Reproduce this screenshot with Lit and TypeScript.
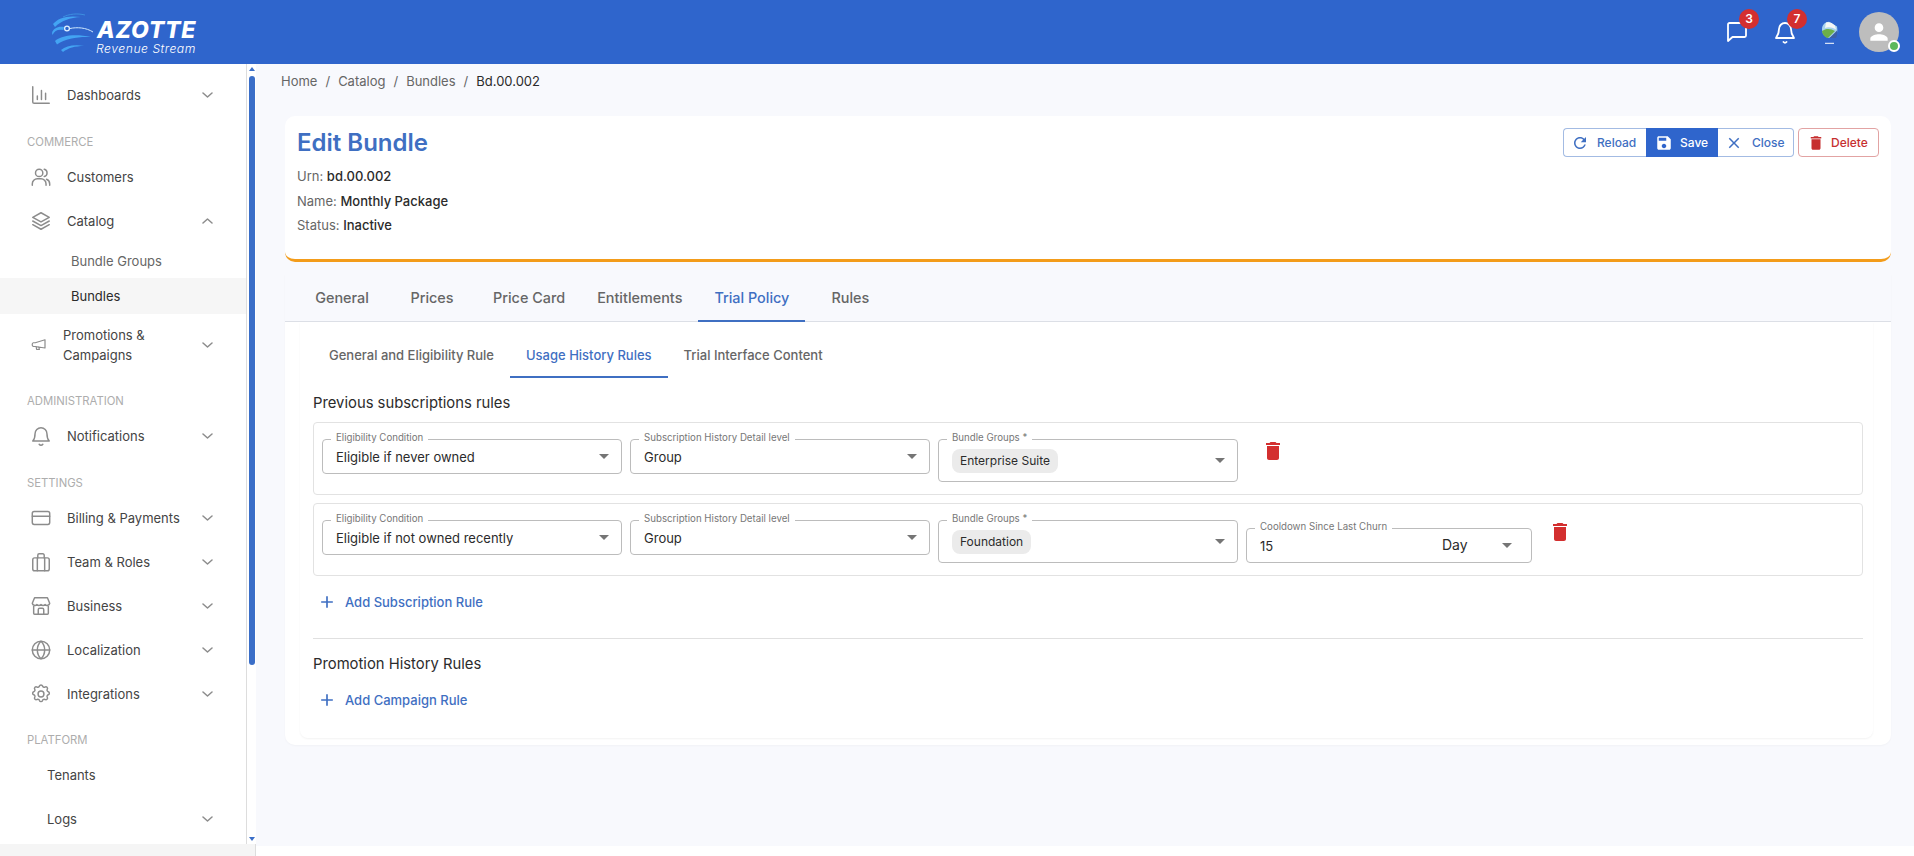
import { LitElement, css, html, svg } from "lit";
import { customElement } from "lit/decorators.js";

// outline icons for the sidebar, 24x24 box
const NAV_ICONS: Record<string, unknown> = {
  chart: svg`<path d="M3 3v16.5A1.5 1.5 0 0 0 4.5 21H21M8 17v-4M12.5 17V7M17 17v-7"/>`,
  users: svg`<circle cx="10" cy="7.5" r="4"/><path d="M2.5 21v-1.5A5.5 5.5 0 0 1 8 14h4a5.5 5.5 0 0 1 5.5 5.5V21M15.5 3.6a4 4 0 0 1 0 7.8M21.5 21v-1.5a5.5 5.5 0 0 0-3.5-5.1"/>`,
  stack: svg`<path d="M12 3 3 8l9 5 9-5-9-5zM3 12l9 5 9-5M3 16l9 5 9-5"/>`,
  megaphone: svg`<path d="M20 5v11L7 14H4.5A2 2 0 0 1 3 12v-1a2 2 0 0 1 1.5-2H7l13-4zM8 14l1 4h3.5l-.8-3.3"/>`,
  bell: svg`<path d="M12 3a6.5 6.5 0 0 0-6.5 6.5c0 4.5-1 6.5-2.5 8h18c-1.5-1.5-2.5-3.5-2.5-8A6.5 6.5 0 0 0 12 3zM10 21c.6.8 1.2 1 2 1s1.4-.2 2-1"/>`,
  card: svg`<rect x="2.5" y="5" width="19" height="14" rx="2"/><path d="M2.5 10h19"/>`,
  briefcase: svg`<rect x="3" y="7.5" width="18" height="14" rx="2"/><path d="M8 21.5v-14M16 21.5v-14M8.5 7.5V4.5A1.5 1.5 0 0 1 10 3h4a1.5 1.5 0 0 1 1.5 1.5v3"/>`,
  store: svg`<path d="M5 3h14l2.5 6a3 3 0 0 1-5 1.5 3.4 3.4 0 0 1-4.5 0 3.4 3.4 0 0 1-4.5 0 3 3 0 0 1-5-1.5L5 3zM4 12v8a1 1 0 0 0 1 1h14a1 1 0 0 0 1-1v-8M9 21v-5a1.5 1.5 0 0 1 1.5-1.5h3A1.5 1.5 0 0 1 15 16v5"/>`,
  globe: svg`<circle cx="12" cy="12" r="9.5"/><path d="M2.5 12h19M12 2.5c3 2.8 4 6 4 9.5s-1 6.7-4 9.5c-3-2.8-4-6-4-9.5s1-6.7 4-9.5z"/>`,
  gear: svg`<circle cx="12" cy="12" r="3.2"/><path d="M10.3 3.3a1.8 1.8 0 0 1 3.4 0 1.8 1.8 0 0 0 2.6 1.1 1.8 1.8 0 0 1 2.5 2.5 1.8 1.8 0 0 0 1.1 2.6 1.8 1.8 0 0 1 0 3.4 1.8 1.8 0 0 0-1.1 2.6 1.8 1.8 0 0 1-2.5 2.5 1.8 1.8 0 0 0-2.6 1.1 1.8 1.8 0 0 1-3.4 0 1.8 1.8 0 0 0-2.6-1.1 1.8 1.8 0 0 1-2.5-2.5 1.8 1.8 0 0 0-1.1-2.6 1.8 1.8 0 0 1 0-3.4 1.8 1.8 0 0 0 1.1-2.6 1.8 1.8 0 0 1 2.5-2.5 1.8 1.8 0 0 0 2.6-1.1z"/>`
};

// solid material icons
const RELOAD = "M17.65 6.35C16.2 4.9 14.21 4 12 4c-4.42 0-7.99 3.58-7.99 8s3.57 8 7.99 8c3.73 0 6.84-2.55 7.73-6h-2.08c-.82 2.33-3.04 4-5.65 4-3.31 0-6-2.69-6-6s2.69-6 6-6c1.66 0 3.14.69 4.22 1.78L13 11h7V4l-2.35 2.35z";
const SAVE = "M17 3H5c-1.11 0-2 .9-2 2v14c0 1.1.89 2 2 2h14c1.1 0 2-.9 2-2V7l-4-4zm-5 16c-1.66 0-3-1.34-3-3s1.34-3 3-3 3 1.34 3 3-1.34 3-3 3zm3-10H5V5h10v4z";
const CLOSE = "M19 6.41 17.59 5 12 10.59 6.41 5 5 6.41 10.59 12 5 17.59 6.41 19 12 13.41 17.59 19 19 17.59 13.41 12z";
const TRASH = "M6 19c0 1.1.9 2 2 2h8c1.1 0 2-.9 2-2V7H6v12zM19 4h-3.5l-1-1h-5l-1 1H5v2h14V4z";
const PLUS = "M19 13h-6v6h-2v-6H5v-2h6V5h2v6h6v2z";
const PERSON = "M12 12c2.21 0 4-1.79 4-4s-1.79-4-4-4-4 1.79-4 4 1.79 4 4 4zm0 2c-2.67 0-8 1.34-8 4v2h16v-2c0-2.66-5.33-4-8-4z";

type NavEntry =
  | { label: string; tight?: boolean }
  | { text: string; icon?: string; chevron?: "up" | "down"; sub?: boolean; active?: boolean; wrap?: boolean };

const NAV: NavEntry[] = [
  { text: "Dashboards", icon: "chart", chevron: "down" },
  { label: "COMMERCE" },
  { text: "Customers", icon: "users" },
  { text: "Catalog", icon: "stack", chevron: "up" },
  { text: "Bundle Groups", sub: true },
  { text: "Bundles", sub: true, active: true },
  { text: "Promotions & Campaigns", icon: "megaphone", chevron: "down", wrap: true },
  { label: "ADMINISTRATION" },
  { text: "Notifications", icon: "bell", chevron: "down" },
  { label: "SETTINGS" },
  { text: "Billing & Payments", icon: "card", chevron: "down" },
  { text: "Team & Roles", icon: "briefcase", chevron: "down" },
  { text: "Business", icon: "store", chevron: "down" },
  { text: "Localization", icon: "globe", chevron: "down" },
  { text: "Integrations", icon: "gear", chevron: "down" },
  { label: "PLATFORM", tight: true },
  { text: "Tenants" },
  { text: "Logs", chevron: "down" }
];

const TABS = [
  { text: "General" },
  { text: "Prices" },
  { text: "Price Card" },
  { text: "Entitlements" },
  { text: "Trial Policy", active: true },
  { text: "Rules" }
];

const SUB_TABS = [
  { text: "General and Eligibility Rule" },
  { text: "Usage History Rules", active: true },
  { text: "Trial Interface Content" }
];

@customElement("app-root")
export class AppRoot extends LitElement {
  static styles = css`
    :host {
      display: block;
      height: 856px;
      overflow: hidden;
      font-family: Inter, "Liberation Sans", sans-serif;
      color: #2b2b2b;
    }
    svg {
      display: block;
      flex: none;
    }
    .shell {
      display: flex;
      flex-direction: column;
      height: 856px;
    }

    /* header */
    .header {
      flex: none;
      height: 64px;
      display: flex;
      align-items: center;
      background: #2f65cc;
      padding: 0 15px 0 52px;
    }
    .logo {
      display: flex;
      align-items: center;
      gap: 2px;
      flex: 1;
    }
    .logo-words {
      display: flex;
      flex-direction: column;
      color: #fff;
      font-style: italic;
      margin-top: 10px;
    }
    .logo-name {
      font-size: 23px;
      line-height: 23px;
      font-weight: 800;
      letter-spacing: 0.7px;
      padding-left: 1px;
    }
    .logo-sub {
      font-size: 12.2px;
      line-height: 14px;
      font-weight: 300;
      letter-spacing: 0.5px;
    }
    .hd-icon {
      position: relative;
      width: 20px;
      height: 20px;
      color: #fff;
      margin-right: 28px;
    }
    .hd-icon.bell-icon {
      margin-right: 26px;
    }
    .badge {
      position: absolute;
      top: -13px;
      left: 12px;
      width: 20px;
      height: 20px;
      border-radius: 50%;
      background: #d32f2f;
      color: #fff;
      font-size: 12px;
      font-weight: 600;
      line-height: 20px;
      text-align: center;
    }
    .lang {
      margin-right: 21px;
    }
    .avatar {
      position: relative;
      width: 40px;
      height: 40px;
      border-radius: 50%;
      background: #bdbdbd;
      display: flex;
      align-items: center;
      justify-content: center;
      color: #fff;
    }
    .dot {
      position: absolute;
      right: -1px;
      bottom: 0;
      width: 8px;
      height: 8px;
      border-radius: 50%;
      background: #5cb85c;
      border: 2px solid #fff;
    }

    /* below the header */
    .middle {
      flex: 1;
      min-height: 0;
      display: flex;
    }
    .rail {
      flex: none;
      width: 256px;
      display: flex;
      flex-direction: column;
    }
    .rail-top {
      flex: 1;
      min-height: 0;
      display: flex;
    }
    .rail-foot {
      flex: none;
      height: 12px;
      background: #f5f5f5;
      border-right: 1px solid #dddddd;
    }
    .sidebar {
      flex: none;
      width: 246px;
      padding-top: 9px;
      border-right: 1px solid #dddddd;
      background: #fff;
      overflow: hidden;
    }
    .nav-label {
      height: 14px;
      padding: 18px 0 6px 27px;
      font-size: 11.3px;
      line-height: 14px;
      color: #adadad;
    }
    .nav-label.tight {
      padding: 17px 0 6px 27px;
    }
    .nav-row {
      display: flex;
      align-items: center;
      height: 44px;
      padding: 0 33px 0 30px;
      font-size: 13px;
      color: #444;
    }
    .nav-row.plain {
      padding-left: 47px;
    }
    .nav-row.sub {
      height: 35px;
      padding-left: 71px;
      color: #666;
    }
    .nav-row.active {
      height: 36px;
      background: #f6f6f6;
      color: #2b2b2b;
    }
    .nav-row.wrap {
      height: 62px;
      line-height: 20px;
    }
    .nav-row.wrap .nav-icon {
      width: 18px;
      height: 18px;
      margin-right: 15px;
    }
    .nav-icon {
      width: 22px;
      height: 22px;
      margin-right: 15px;
      fill: none;
      stroke: #8c8c8c;
      stroke-width: 1.6;
      stroke-linecap: round;
      stroke-linejoin: round;
    }
    .nav-text {
      flex: 1;
    }
    .nav-row.wrap .nav-text {
      max-width: 112px;
      margin-right: auto;
    }
    .chev {
      width: 11px;
      height: 6px;
      fill: none;
      stroke: #8c8c8c;
      stroke-width: 1.5;
      stroke-linecap: round;
      stroke-linejoin: round;
    }

    .scrollbar {
      flex: none;
      width: 9px;
      display: flex;
      flex-direction: column;
      align-items: center;
      padding-left: 1px;
      box-sizing: border-box;
    }
    .arrow-up,
    .arrow-down {
      width: 0;
      height: 0;
      border-left: 3px solid transparent;
      border-right: 3px solid transparent;
    }
    .arrow-up {
      margin-top: 3px;
      border-bottom: 4px solid #3a6ec8;
    }
    .arrow-down {
      margin-top: auto;
      margin-bottom: 3px;
      border-top: 4px solid #3a6ec8;
    }
    .thumb {
      width: 6px;
      height: 589px;
      margin-top: 5px;
      border-radius: 3px;
      background: #3a6ec8;
    }

    /* main column */
    .content {
      flex: 1;
      min-width: 0;
      background: #fff;
    }
    .main {
      height: 782px;
      box-sizing: border-box;
      background: #f8f9fd;
      padding: 8px 23px 0 25px;
    }
    .crumbs {
      display: flex;
      gap: 8px;
      height: 18px;
      font-size: 13px;
      line-height: 18px;
      color: #666;
    }
    .crumbs .here {
      color: #2b2b2b;
    }
    .head-card {
      margin: 26px 0 0 4px;
      height: 143px;
      display: flex;
      justify-content: space-between;
      padding: 0 12px;
      background: #fff;
      border-bottom: 3px solid #f39c1a;
      border-radius: 10px;
    }
    .head-card h1 {
      margin: 12px 0 6px;
      font-size: 24px;
      line-height: 30px;
      font-weight: 600;
      color: #3f6fc2;
    }
    .meta {
      font-size: 13px;
      line-height: 24.5px;
      color: #666;
    }
    .meta b {
      font-weight: 500;
      color: #2b2b2b;
    }
    .actions {
      display: flex;
      gap: 4px;
      margin-top: 12px;
      height: 29px;
    }
    .group {
      display: flex;
    }
    .btn {
      display: flex;
      align-items: center;
      box-sizing: border-box;
      height: 29px;
      font-size: 12px;
      font-weight: 500;
      color: #3f6fc2;
      background: #fff;
      border: 1px solid #a3bbe3;
      fill: currentColor;
    }
    .btn svg {
      width: 18px;
      height: 18px;
    }
    .btn.reload {
      width: 83px;
      padding-left: 7px;
      gap: 8px;
      border-radius: 4px 0 0 4px;
      border-right: 0;
    }
    .btn.save {
      width: 72px;
      padding-left: 8px;
      gap: 7px;
      color: #fff;
      background: #2f65cc;
      border-color: #2f65cc;
    }
    .btn.close {
      width: 76px;
      padding-left: 7px;
      gap: 9px;
      border-radius: 0 4px 4px 0;
      border-left: 0;
    }
    .btn.delete {
      width: 81px;
      padding-left: 8px;
      gap: 6px;
      color: #c62f2f;
      border-color: #e2a3a3;
      border-radius: 4px;
    }

    /* tabs card */
    .tabs-card {
      margin: 12px 0 0 4px;
      height: 471px;
      background: #fff;
      border-radius: 0 0 10px 10px;
      box-shadow: 0 1px 2px rgba(0, 0, 0, 0.03);
    }
    .tabs {
      display: flex;
      height: 47px;
      padding-left: 12px;
      background: #f8f9fd;
      border-bottom: 1px solid #dcdfe6;
    }
    .tab {
      display: flex;
      align-items: center;
      justify-content: center;
      box-sizing: border-box;
      min-width: 90px;
      padding: 0 16px;
      font-size: 14.4px;
      font-weight: 500;
      color: #666;
      border-bottom: 2px solid transparent;
      margin-bottom: -1px;
    }
    .tab.on {
      color: #3f6fc2;
      border-bottom-color: #3f6fc2;
    }
    .panel {
      margin: 0 18px 0 15px;
      height: 405px;
      padding: 11px 10px 0 13px;
      border-radius: 0 0 8px 8px;
      box-shadow: 0 1px 2px rgba(0, 0, 0, 0.05);
    }
    .sub-tabs {
      display: flex;
      height: 45px;
    }
    .sub-tab {
      display: flex;
      align-items: center;
      padding: 0 16px;
      font-size: 13px;
      font-weight: 500;
      color: #666;
      border-bottom: 2px solid transparent;
    }
    .sub-tab.on {
      color: #3f6fc2;
      border-bottom-color: #3f6fc2;
    }
    .section-title {
      font-size: 14.8px;
      line-height: 18px;
      color: #2b2b2b;
      margin-top: 16px;
    }
    .rules {
      display: flex;
      flex-direction: column;
      gap: 8px;
      margin-top: 10px;
    }
    .rule {
      display: flex;
      align-items: flex-start;
      gap: 8px;
      padding: 16px 8px 0;
      height: 55px;
      border: 1px solid #e2e2e2;
      border-radius: 4px;
    }
    .field {
      position: relative;
      display: flex;
      align-items: center;
      box-sizing: border-box;
      width: 300px;
      height: 35px;
      padding: 0 12px 0 13px;
      border: 1px solid #bcbcbc;
      border-radius: 4px;
      font-size: 13px;
    }
    .field.tall {
      height: 43px;
    }
    .field.cool {
      width: 286px;
      margin-top: 8px;
      padding-right: 19px;
    }
    .field label {
      position: absolute;
      top: -8px;
      left: 8px;
      padding: 0 5px;
      background: #fff;
      font-size: 9.7px;
      line-height: 12px;
      color: #777;
      white-space: nowrap;
    }
    .field .value {
      flex: 1;
    }
    .caret {
      width: 0;
      height: 0;
      border-left: 5px solid transparent;
      border-right: 5px solid transparent;
      border-top: 5px solid #757575;
    }
    .chip {
      display: inline-flex;
      align-items: center;
      height: 24px;
      padding: 0 8px;
      border-radius: 8px;
      background: #ebebeb;
      font-size: 12px;
    }
    .unit {
      width: 60px;
      margin-bottom: 3px;
      font-size: 14px;
    }
    .trash {
      width: 24px;
      height: 24px;
      margin-left: 8px;
      fill: #d32f2f;
    }
    .trash.first {
      margin-left: 15px;
    }
    .add {
      display: flex;
      align-items: center;
      gap: 9px;
      height: 34px;
      padding-left: 4px;
      font-size: 13px;
      font-weight: 500;
      color: #3f6fc2;
      fill: currentColor;
    }
    .add svg {
      width: 20px;
      height: 20px;
      margin-right: -1px;
    }
    .add.first {
      margin-top: 9px;
    }
    .add.second {
      margin-top: 10px;
    }
    .divider {
      height: 1px;
      margin-top: 19px;
      background: #e0e0e0;
    }
  `;

  private renderGlobe() {
    return html`
      <svg width="42" height="40" viewBox="0 0 42 40" fill="#43a4f3">
        <path d="M11 5C17 2 25 1 33 3" fill="none" stroke="#3d8fe0" stroke-width="1"/>
        <path d="M1 12C6 6 15 3 29 5C18 5.5 9 9 3 15Z"/>
        <path d="M0 21C1 16.5 6 14 12 15L11.5 18C6 17 2.5 18.5 .5 23Z"/>
        <circle cx="15" cy="16.5" r="2.4" fill="none" stroke="#dff1ff" stroke-width="1.3"/>
        <path d="M18 16.5C25 15 34 15.5 41 20" fill="none" stroke="#cfe9ff" stroke-width="1"/>
        <path d="M3 29C10 23 24 22 39 25C26 24.5 14 26 5 32.5Z"/>
        <path d="M9 38C14 34 22 32 32 34C23 34 16 36 11 40Z"/>
      </svg>
    `;
  }

  private renderNav(entry: NavEntry) {
    if ("label" in entry) {
      return html`<div class="nav-label ${entry.tight ? "tight" : ""}">${entry.label}</div>`;
    }
    const cls = ["nav-row"];
    if (entry.sub) cls.push("sub");
    else if (!entry.icon) cls.push("plain");
    if (entry.active) cls.push("active");
    if (entry.wrap) cls.push("wrap");
    return html`
      <div class=${cls.join(" ")}>
        ${entry.icon
          ? html`<svg class="nav-icon" viewBox="0 0 24 24">${NAV_ICONS[entry.icon]}</svg>`
          : ""}
        <span class="nav-text">${entry.text}</span>
        ${entry.chevron
          ? html`<svg class="chev" viewBox="0 0 11 6">
              <path d=${entry.chevron === "up" ? "M1 5l4.5-4 4.5 4" : "M1 1l4.5 4 4.5-4"}/>
            </svg>`
          : ""}
      </div>
    `;
  }

  private renderSelect(label: string, value: string) {
    return html`
      <div class="field">
        <label>${label}</label>
        <span class="value">${value}</span>
        <span class="caret"></span>
      </div>
    `;
  }

  private renderChipSelect(value: string) {
    return html`
      <div class="field tall">
        <label>Bundle Groups *</label>
        <span class="value"><span class="chip">${value}</span></span>
        <span class="caret"></span>
      </div>
    `;
  }

  private renderTrash(first = false) {
    return html`<svg class="trash ${first ? "first" : ""}" viewBox="0 0 24 24"><path d=${TRASH}/></svg>`;
  }

  private renderAdd(text: string, cls: string) {
    return html`
      <div class="add ${cls}">
        <svg viewBox="0 0 24 24"><path d=${PLUS}/></svg>
        <span>${text}</span>
      </div>
    `;
  }

  render() {
    return html`
      <div class="shell">
        <header class="header">
          <div class="logo">
            ${this.renderGlobe()}
            <div class="logo-words">
              <span class="logo-name">AZOTTE</span>
              <span class="logo-sub">Revenue Stream</span>
            </div>
          </div>
          <div class="hd-icon">
            <svg width="20" height="20" viewBox="0 0 20 20" fill="none" stroke="currentColor" stroke-width="1.8" stroke-linejoin="round">
              <path d="M1 2.5A1.5 1.5 0 0 1 2.5 1h15A1.5 1.5 0 0 1 19 2.5v11a1.5 1.5 0 0 1-1.5 1.5H5.5L1 19V2.5z"/>
            </svg>
            <span class="badge">3</span>
          </div>
          <div class="hd-icon bell-icon">
            <svg width="20" height="22" viewBox="0 0 20 22" fill="none" stroke="currentColor" stroke-width="1.8" stroke-linecap="round" stroke-linejoin="round">
              <path d="M10 1a6 6 0 0 0-6 6c0 5-1.5 7-3 9h18c-1.5-2-3-4-3-9a6 6 0 0 0-6-6zM8.5 20c.5.6 1 .8 1.5.8s1-.2 1.5-.8"/>
            </svg>
            <span class="badge">7</span>
          </div>
          <svg class="lang" width="17" height="23" viewBox="0 0 17 23">
            <path d="M1 8C1 4 4 1 8 .8L16 5.5C16.5 8 16.5 11 15.5 13L8 17C4 16.5 1 13 1 8z" fill="#a9d3ee"/>
            <path d="M5 1.5C8 .5 11 1.5 14 4.5L15 8.5C11 6 7 5.5 4 7z" fill="#f4f6f6"/>
            <path d="M1 10C5 7 10 7.5 14 10L7 17C4 16.5 1.5 14 1 10z" fill="#6db04a"/>
            <path d="M8.5 17L16 9.5C16.5 12 16 15 15 17z" fill="#3c5fa8"/>
            <path d="M4 22.3h9" stroke="#fff" stroke-width="1"/>
          </svg>
          <div class="avatar">
            <svg width="26" height="26" viewBox="0 0 24 24" fill="currentColor"><path d=${PERSON}/></svg>
            <span class="dot"></span>
          </div>
        </header>

        <div class="middle">
          <div class="rail">
            <div class="rail-top">
              <nav class="sidebar">${NAV.map((entry) => this.renderNav(entry))}</nav>
              <div class="scrollbar">
                <span class="arrow-up"></span>
                <span class="thumb"></span>
                <span class="arrow-down"></span>
              </div>
            </div>
            <div class="rail-foot"></div>
          </div>

          <div class="content">
            <main class="main">
              <div class="crumbs">
                <span>Home</span><span>/</span><span>Catalog</span><span>/</span><span>Bundles</span><span>/</span>
                <span class="here">Bd.00.002</span>
              </div>

              <section class="head-card">
                <div>
                  <h1>Edit Bundle</h1>
                  <div class="meta">Urn: <b>bd.00.002</b></div>
                  <div class="meta">Name: <b>Monthly Package</b></div>
                  <div class="meta">Status: <b>Inactive</b></div>
                </div>
                <div class="actions">
                  <div class="group">
                    <div class="btn reload"><svg viewBox="0 0 24 24"><path d=${RELOAD}/></svg>Reload</div>
                    <div class="btn save"><svg viewBox="0 0 24 24"><path d=${SAVE}/></svg>Save</div>
                    <div class="btn close"><svg viewBox="0 0 24 24"><path d=${CLOSE}/></svg>Close</div>
                  </div>
                  <div class="btn delete"><svg viewBox="0 0 24 24"><path d=${TRASH}/></svg>Delete</div>
                </div>
              </section>

              <section class="tabs-card">
                <div class="tabs">
                  ${TABS.map((t) => html`<div class="tab ${t.active ? "on" : ""}">${t.text}</div>`)}
                </div>
                <div class="panel">
                  <div class="sub-tabs">
                    ${SUB_TABS.map((t) => html`<div class="sub-tab ${t.active ? "on" : ""}">${t.text}</div>`)}
                  </div>
                  <div class="section-title">Previous subscriptions rules</div>
                  <div class="rules">
                    <div class="rule">
                      ${this.renderSelect("Eligibility Condition", "Eligible if never owned")}
                      ${this.renderSelect("Subscription History Detail level", "Group")}
                      ${this.renderChipSelect("Enterprise Suite")}
                      ${this.renderTrash(true)}
                    </div>
                    <div class="rule">
                      ${this.renderSelect("Eligibility Condition", "Eligible if not owned recently")}
                      ${this.renderSelect("Subscription History Detail level", "Group")}
                      ${this.renderChipSelect("Foundation")}
                      <div class="field cool">
                        <label>Cooldown Since Last Churn</label>
                        <span class="value">15</span>
                        <span class="unit">Day</span>
                        <span class="caret"></span>
                      </div>
                      ${this.renderTrash()}
                    </div>
                  </div>
                  ${this.renderAdd("Add Subscription Rule", "first")}
                  <div class="divider"></div>
                  <div class="section-title">Promotion History Rules</div>
                  ${this.renderAdd("Add Campaign Rule", "second")}
                </div>
              </section>
            </main>
          </div>
        </div>
      </div>
    `;
  }
}
